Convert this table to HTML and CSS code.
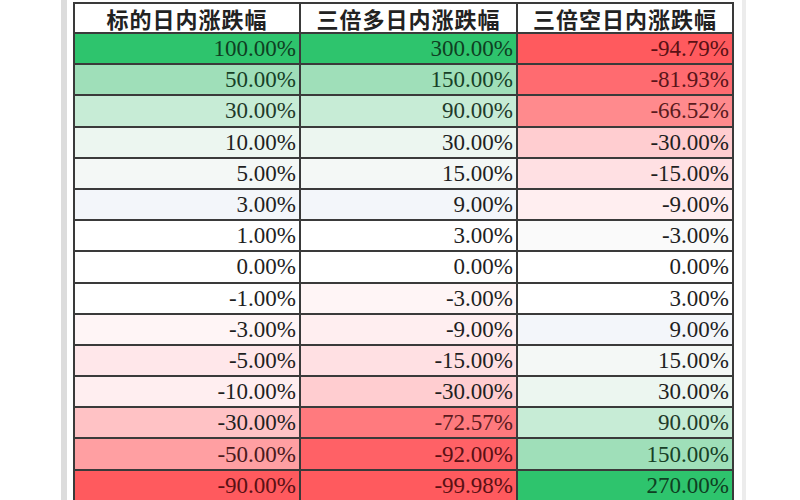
FILE: index.html
```html
<!DOCTYPE html>
<html lang="zh">
<head>
<meta charset="utf-8">
<link rel="stylesheet" href="styles.css">
</head>
<body>
<div class="frame">
  <div class="stripe-left"></div>
  <table class="grid">
    <colgroup><col class="c1"><col class="c2"><col class="c3"></colgroup>
    <thead>
      <tr><th>标的日内涨跌幅</th><th>三倍多日内涨跌幅</th><th>三倍空日内涨跌幅</th></tr>
    </thead>
    <tbody>
      <tr><td class="g1">100.00%</td><td class="g1">300.00%</td><td class="r1">-94.79%</td></tr>
      <tr><td class="g2">50.00%</td><td class="g2">150.00%</td><td class="r2">-81.93%</td></tr>
      <tr><td class="g3">30.00%</td><td class="g3">90.00%</td><td class="r3">-66.52%</td></tr>
      <tr><td class="g4">10.00%</td><td class="g4">30.00%</td><td class="r5">-30.00%</td></tr>
      <tr><td class="g5">5.00%</td><td class="g5">15.00%</td><td class="r6">-15.00%</td></tr>
      <tr><td class="g6">3.00%</td><td class="g6">9.00%</td><td class="r7">-9.00%</td></tr>
      <tr><td class="w">1.00%</td><td class="w">3.00%</td><td class="n">-3.00%</td></tr>
      <tr><td class="w">0.00%</td><td class="w">0.00%</td><td class="w">0.00%</td></tr>
      <tr><td class="w">-1.00%</td><td class="r8">-3.00%</td><td class="w">3.00%</td></tr>
      <tr><td class="r8">-3.00%</td><td class="r7">-9.00%</td><td class="g6">9.00%</td></tr>
      <tr><td class="r7b">-5.00%</td><td class="r6">-15.00%</td><td class="g5">15.00%</td></tr>
      <tr><td class="r7">-10.00%</td><td class="r5">-30.00%</td><td class="g4">30.00%</td></tr>
      <tr><td class="r5b">-30.00%</td><td class="r3b">-72.57%</td><td class="g3">90.00%</td></tr>
      <tr><td class="r4">-50.00%</td><td class="r1b">-92.00%</td><td class="g2">150.00%</td></tr>
      <tr><td class="r1">-90.00%</td><td class="r1">-99.98%</td><td class="g1">270.00%</td></tr>
    </tbody>
  </table>
  <div class="stripe-right"></div>
</div>
</body>
</html>
```

FILE: styles.css
```css
html, body {
  margin: 0;
  padding: 0;
  background: #ffffff;
  overflow: hidden;
}

.frame {
  display: flex;
  align-items: flex-start;
  padding-left: 61px;
  height: 500px;
}

.stripe-left {
  width: 6px;
  height: 500px;
  background: #dcdcdc;
  flex: none;
  margin-right: 6px;
}

.stripe-right {
  width: 4px;
  height: 500px;
  background: #ececec;
  flex: none;
  margin-left: 8px;
}

.grid {
  border-collapse: collapse;
  table-layout: fixed;
  width: 659px;
  margin-top: 2px;
  flex: none;
}

.c1 { width: 226px; }
.c2 { width: 217px; }
.c3 { width: 216px; }

.grid th, .grid td {
  border: 2px solid #3a3a3a;
  padding: 0 3px 0 0;
  white-space: nowrap;
}

.grid thead tr { height: 30px; }
.grid tbody tr { height: 31.2px; }

.grid th {
  font-family: "Noto Sans CJK SC", "Noto Sans", sans-serif;
  font-size: 22px;
  font-weight: 700;
  color: #222222;
  text-align: center;
  background: #ffffff;
  line-height: 28px;
  letter-spacing: 1px;
  padding: 0;
}

.grid td {
  font-family: "Liberation Serif", "Times New Roman", serif;
  font-size: 23px;
  line-height: 27px;
  text-align: right;
  color: #1f1f1f;
}

/* green scale */
.g1 { background: #2ec46d; color: #0e3f22 !important; }
.g2 { background: #9fdfb9; color: #173f27 !important; }
.g3 { background: #c7ecd6; color: #1f3a2a !important; }
.g4 { background: #ecf6f0; }
.g5 { background: #f4f8f6; }
.g6 { background: #f3f6fa; }

/* neutral */
.w { background: #ffffff; }
.n { background: #fafafa; }

/* red scale */
.r1 { background: #ff5a5e; color: #5a1014 !important; }
.r1b { background: #ff6166; color: #5a1014 !important; }
.r2 { background: #ff6b70; color: #5a1419 !important; }
.r3 { background: #ff8a8d; color: #5a1a1d !important; }
.r3b { background: #ff7a7e; color: #5a1a1d !important; }
.r4 { background: #ff9fa2; color: #4a1a1c !important; }
.r5 { background: #ffcdd0; }
.r5b { background: #ffc2c5; }
.r6 { background: #ffe0e3; }
.r7 { background: #ffeef0; }
.r7b { background: #ffe7ea; }
.r8 { background: #fff5f6; }
```
